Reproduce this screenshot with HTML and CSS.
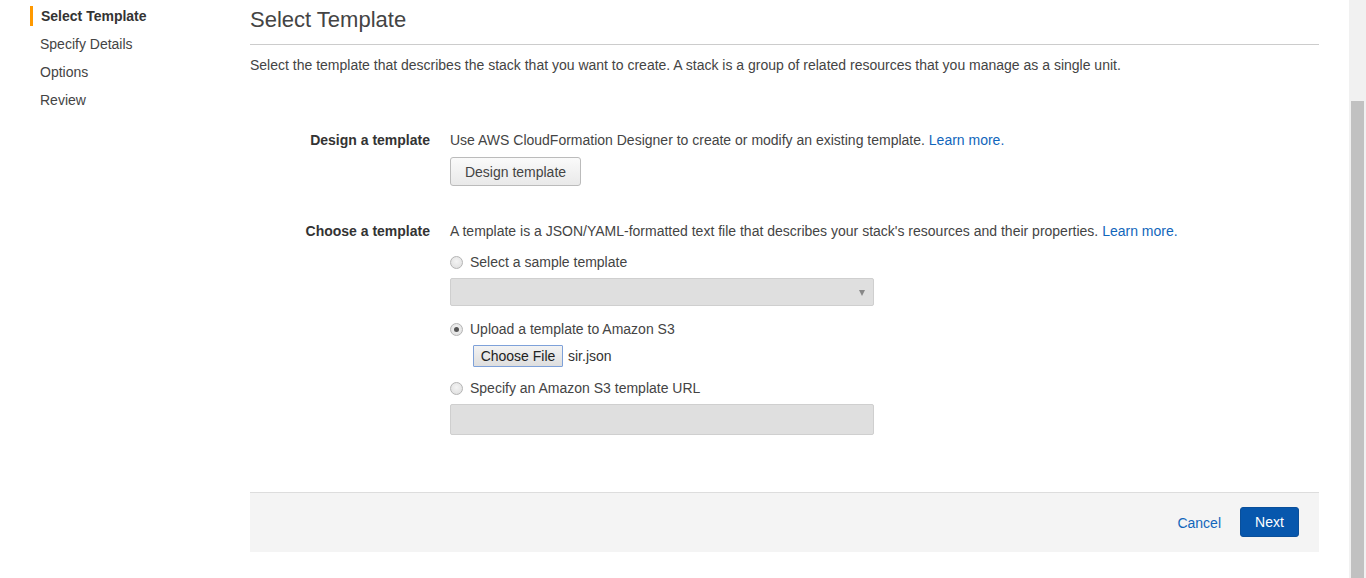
FILE: index.html
```html
<!DOCTYPE html>
<html lang="en">
<head>
<meta charset="utf-8">
<title>Select Template</title>
<link rel="stylesheet" href="styles.css">
</head>
<body>
<div class="page">
  <div class="content">
    <nav class="sidebar">
      <div class="nav-item active">Select Template</div>
      <div class="nav-item">Specify Details</div>
      <div class="nav-item">Options</div>
      <div class="nav-item">Review</div>
    </nav>
    <main class="main">
      <h1 class="title">Select Template</h1>
      <p class="desc">Select the template that describes the stack that you want to create. A stack is a group of related resources that you manage as a single unit.</p>

      <div class="form-row row-design">
        <div class="label">Design a template</div>
        <div class="field">
          <div class="text-line">Use AWS CloudFormation Designer to create or modify an existing template. <a class="link">Learn more.</a></div>
          <button class="btn-default">Design template</button>
        </div>
      </div>

      <div class="form-row row-choose">
        <div class="label">Choose a template</div>
        <div class="field">
          <div class="text-line">A template is a JSON/YAML-formatted text file that describes your stack's resources and their properties. <a class="link">Learn more.</a></div>
          <div class="radio-line first"><span class="radio"></span>Select a sample template</div>
          <div class="select-box"><span class="caret"></span></div>
          <div class="radio-line second"><span class="radio checked"></span>Upload a template to Amazon S3</div>
          <div class="file-line"><span class="file-btn">Choose File</span><span class="file-name">sir.json</span></div>
          <div class="radio-line third"><span class="radio"></span>Specify an Amazon S3 template URL</div>
          <div class="url-input"></div>
        </div>
      </div>

      <div class="footer">
        <a class="cancel">Cancel</a>
        <button class="btn-primary">Next</button>
      </div>
    </main>
  </div>
  <div class="scrollbar"><div class="thumb"></div></div>
</div>
</body>
</html>
```

FILE: styles.css
```css
html, body {
  margin: 0;
  padding: 0;
  height: 100%;
  overflow: hidden;
}
body {
  font-family: "Liberation Sans", Arial, sans-serif;
  font-size: 14px;
  color: #444;
  background: #fff;
}
.page {
  display: flex;
  height: 578px;
}
.content {
  flex: 1;
  display: flex;
}
.sidebar {
  width: 250px;
  flex: none;
  padding-top: 6px;
  display: flex;
  flex-direction: column;
  gap: 8px;
}
.nav-item {
  margin-left: 30px;
  padding-left: 10px;
  height: 20px;
  line-height: 20px;
  color: #444;
}
.nav-item.active {
  border-left: 3px solid #f90;
  padding-left: 8px;
  font-weight: bold;
  color: #333;
}
.main {
  width: 1069px;
  flex: none;
}
.title {
  margin: 0;
  height: 38px;
  line-height: 40px;
  font-size: 22px;
  font-weight: normal;
  color: #444;
  padding-bottom: 6px;
  border-bottom: 1px solid #ccc;
}
.desc {
  margin: 10px 0 0;
  line-height: 20px;
}
.form-row {
  display: flex;
  gap: 20px;
}
.row-design { margin-top: 55px; }
.row-choose { margin-top: 35px; }
.label {
  width: 180px;
  flex: none;
  text-align: right;
  font-weight: bold;
  line-height: 20px;
  color: #333;
}
.field {
  display: flex;
  flex-direction: column;
  align-items: flex-start;
}
.text-line {
  line-height: 20px;
}
.link {
  color: #1166bb;
  text-decoration: none;
}
.btn-default {
  margin-top: 7px;
  height: 29px;
  width: 131px;
  padding: 0;
  font-family: inherit;
  font-size: 14px;
  color: #444;
  background: linear-gradient(#fafafa, #e9e9e9);
  border: 1px solid #bbb;
  border-radius: 3px;
}
.radio-line {
  display: flex;
  align-items: center;
  line-height: 20px;
  height: 20px;
}
.radio-line.first { margin-top: 11px; }
.radio-line.second { margin-top: 13px; }
.radio-line.third { margin-top: 11px; }
.radio {
  box-sizing: border-box;
  width: 13px;
  height: 13px;
  border-radius: 50%;
  border: 1px solid #b4b4b4;
  background: radial-gradient(circle at 50% 40%, #f4f4f4, #dcdcdc);
  margin: 0 7px 0 0;
  position: relative;
}
.radio.checked::after {
  content: "";
  position: absolute;
  left: 3px;
  top: 3px;
  width: 5px;
  height: 5px;
  border-radius: 50%;
  background: #555;
}
.select-box {
  box-sizing: border-box;
  margin-top: 6px;
  width: 424px;
  height: 28px;
  background: #dfdfdf;
  border: 1px solid #cfcfcf;
  border-radius: 2px;
  display: flex;
  justify-content: flex-end;
  align-items: center;
  padding-right: 8px;
}
.caret {
  width: 0;
  height: 0;
  border-left: 3px solid transparent;
  border-right: 3px solid transparent;
  border-top: 6px solid #888;
  margin-top: 2px;
}
.file-line {
  margin-top: 6px;
  margin-left: 23px;
  display: flex;
  align-items: center;
}
.file-btn {
  box-sizing: border-box;
  height: 22px;
  width: 90px;
  line-height: 20px;
  text-align: center;
  font-size: 14px;
  color: #222;
  background: linear-gradient(#f3f3f3, #dedede);
  border: 1px solid #7ea1d9;
  border-radius: 1px;
}
.file-name {
  margin-left: 5px;
  color: #333;
}
.url-input {
  box-sizing: border-box;
  margin-top: 6px;
  width: 424px;
  height: 31px;
  background: #dfdfdf;
  border: 1px solid #cfcfcf;
  border-radius: 2px;
}
.footer {
  margin-top: 57px;
  height: 59px;
  border-top: 1px solid #ddd;
  background: #f4f4f4;
  display: flex;
  justify-content: flex-end;
  align-items: center;
  padding-right: 20px;
}
.cancel {
  color: #1166bb;
  margin-right: 19px;
}
.btn-primary {
  width: 59px;
  height: 30px;
  padding: 0;
  font-family: inherit;
  font-size: 14px;
  color: #fff;
  background: #0757ad;
  border: 1px solid #0a4f9a;
  border-radius: 3px;
  margin-top: -2px;
}
.scrollbar {
  width: 17px;
  flex: none;
  background: #f1f1f1;
  display: flex;
  justify-content: center;
}
.thumb {
  width: 13px;
  margin-top: 101px;
  background: #c1c1c1;
  height: 477px;
}
```
